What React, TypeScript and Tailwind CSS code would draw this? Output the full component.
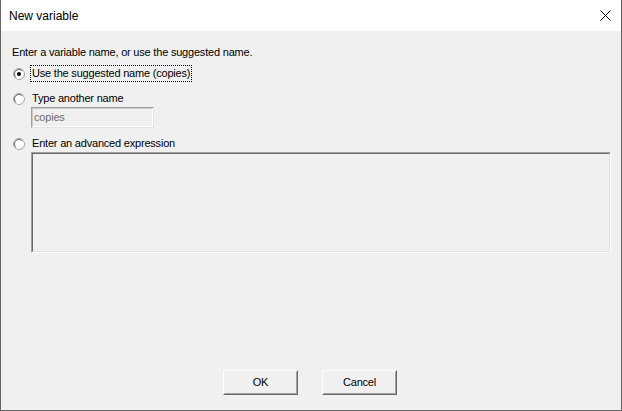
import React from "react";

function Radio({ checked }: { checked?: boolean }) {
  return (
    <svg width="12" height="12" viewBox="0 0 12 12" className="shrink-0">
      <circle cx="6" cy="6" r="5.5" fill="#ffffff" stroke="#a0a0a0" strokeWidth="1" />
      <path d="M9.2 2.8 A4.5 4.5 0 0 0 2.8 9.2" fill="none" stroke="#696969" strokeWidth="1" />
      <path d="M11.2 3.2 A5.5 5.5 0 0 1 3.2 11.2" fill="none" stroke="#e8e8e8" strokeWidth="1" />
      {checked && <circle cx="6" cy="6" r="2" fill="#000000" />}
    </svg>
  );
}

function Button({ label }: { label: string }) {
  return (
    <div className="w-[75px] h-[25px] border border-t-white border-l-white border-r-[#696969] border-b-[#696969]">
      <div className="w-full h-full flex items-center justify-center border border-t-[#f0f0f0] border-l-[#f0f0f0] border-r-[#a0a0a0] border-b-[#a0a0a0] text-[11px] text-black">
        {label}
      </div>
    </div>
  );
}

export default function App() {
  return (
    <div
      className="w-[622px] h-[411px] flex flex-col bg-[#f0f0f0] border-l border-r border-b border-[#646464] text-black"
      style={{ fontFamily: '"Liberation Sans", Arial, sans-serif' }}
    >
      {/* title bar */}
      <div className="h-[31px] bg-white flex items-center justify-between pl-[8px] pr-[10px] shrink-0">
        <span className="text-[12px]">New variable</span>
        <svg width="11" height="11" viewBox="0 0 11 11">
          <path d="M0.5 0.5 L10.5 10.5 M10.5 0.5 L0.5 10.5" stroke="#000" strokeWidth="1" />
        </svg>
      </div>

      <div className="flex-1 flex flex-col pl-[11px] text-[11px] leading-[13px] tracking-[-0.2px]">
        <div className="mt-[15px] h-[13px]">Enter a variable name, or use the suggested name.</div>

        <div className="mt-[6px] h-[17px] flex items-center">
          <span className="ml-[1px]"><Radio checked /></span>
          <span className="ml-[5px] px-[1px] h-[17px] flex items-center border border-dotted border-black">
            Use the suggested name (copies)
          </span>
        </div>

        <div className="mt-[8px] h-[17px] flex items-center">
          <span className="ml-[1px]"><Radio /></span>
          <span className="ml-[7px]">Type another name</span>
        </div>

        <div className="ml-[19px] w-[123px] h-[21px] border border-t-[#a0a0a0] border-l-[#a0a0a0] border-r-[#e3e3e3] border-b-[#e3e3e3]">
          <div className="w-full h-full border border-t-[#c8c8c8] border-l-[#c8c8c8] border-r-white border-b-white flex items-center pl-[1px] text-[#6d6d6d]">
            copies
          </div>
        </div>

        <div className="mt-[7px] h-[17px] flex items-center">
          <span className="ml-[1px]"><Radio /></span>
          <span className="ml-[7px]">Enter an advanced expression</span>
        </div>

        <div className="ml-[19px] w-[580px] h-[101px] border border-t-[#a0a0a0] border-l-[#a0a0a0] border-r-white border-b-white">
          <div className="w-full h-full border border-t-[#696969] border-l-[#696969] border-r-[#e3e3e3] border-b-[#e3e3e3] bg-[#f0f0f0]" />
        </div>

        <div className="mt-auto mb-[15px] ml-[211px] flex gap-[24px]">
          <Button label="OK" />
          <Button label="Cancel" />
        </div>
      </div>
    </div>
  );
}
